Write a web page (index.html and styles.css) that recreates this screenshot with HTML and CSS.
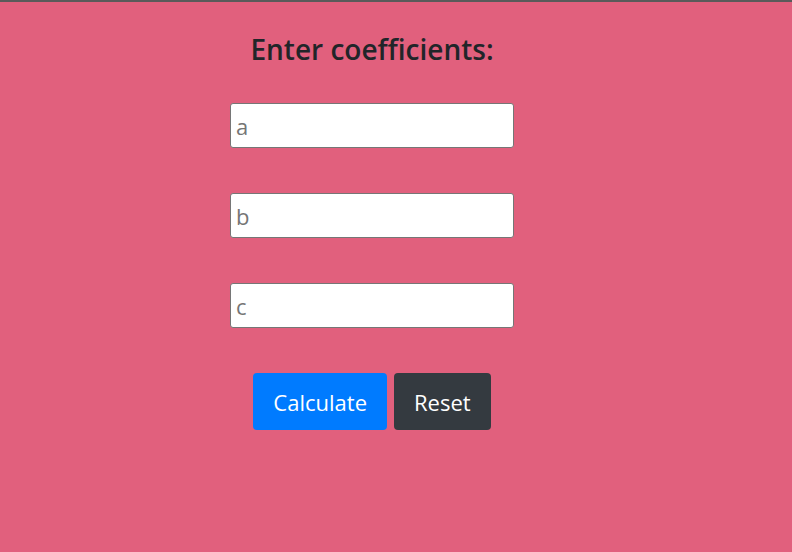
FILE: index.html
```html
<!DOCTYPE html>
<html>
<head>
<meta charset="utf-8">
<link rel="stylesheet" href="styles.css">
</head>
<body>
<main class="form">
  <h2 class="title">Enter coefficients:</h2>
  <input class="field" type="text" placeholder="a">
  <input class="field" type="text" placeholder="b">
  <input class="field" type="text" placeholder="c">
  <div class="actions">
    <button class="btn btn-primary">Calculate</button>
    <button class="btn btn-dark">Reset</button>
  </div>
</main>
</body>
</html>
```
FILE: styles.css
```css
html, body {
  margin: 0;
  padding: 0;
  height: 100%;
}
body {
  background: #e1607d;
  border-top: 2px solid #5a5a5a;
  box-sizing: border-box;
  font-family: "Open Sans", "Noto Sans", sans-serif;
}
.form {
  width: 284px;
  margin-left: 230px;
  display: flex;
  flex-direction: column;
}
.title {
  margin: 29px 0 36px;
  font-size: 28px;
  line-height: 36px;
  font-weight: 600;
  color: #212529;
  text-align: center;
}
.field {
  height: 45px;
  box-sizing: border-box;
  border: 1px solid #767676;
  border-radius: 3px;
  background: #fff;
  padding: 0 5px;
  font-family: inherit;
  font-size: 22px;
  margin: 0 0 45px;
}
.field::placeholder {
  color: #757575;
}
.actions {
  display: flex;
  justify-content: center;
  gap: 7px;
}
.btn {
  border: none;
  border-radius: 4px;
  color: #fff;
  font-family: inherit;
  font-size: 22px;
  height: 57px;
  padding: 0 20px;
}
.btn-primary {
  background: #007bff;
}
.btn-dark {
  background: #343a40;
}
```
